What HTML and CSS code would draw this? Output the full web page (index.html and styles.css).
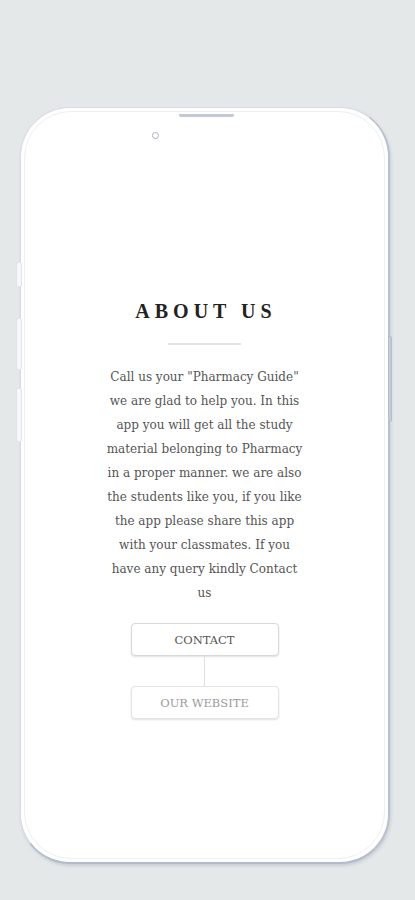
FILE: index.html
```html
<!DOCTYPE html>
<html lang="en">
<head>
  <meta charset="UTF-8" />
  <meta name="viewport" content="width=device-width, initial-scale=1.0"/>
  <title>About Us</title>
  <link rel="stylesheet" href="styles.css">
</head>
<body>
  <div class="phone">
    <span class="side-btn btn-a"></span>
    <span class="side-btn btn-b"></span>
    <span class="side-btn btn-c"></span>
    <span class="side-btn btn-power"></span>
    <div class="screen">
      <span class="speaker"></span>
      <span class="camera"></span>

      <div class="about">
        <h1>ABOUT US</h1>
        <hr class="divider"/>
        <p class="text">Call us your "Pharmacy Guide" we are glad to help you. In this app you will get all the study material belonging to Pharmacy in a proper manner. we are also the students like you, if you like the app please share this app with your classmates. If you have any query kindly Contact us</p>

        <div class="links">
          <button class="link-btn">CONTACT</button>
          <span class="connector"></span>
          <button class="link-btn faded">OUR WEBSITE</button>
        </div>
      </div>
    </div>
  </div>
</body>
</html>
```

FILE: styles.css
```css
body {
  margin: 0;
  background: #e4e8e9;
  font-family: 'DejaVu Serif', serif;
  height: 900px;
  overflow: hidden;
}

.phone {
  position: relative;
  width: 370px;
  height: 757px;
  margin: 107px 0 0 20px;
  box-sizing: border-box;
  border-radius: 50px;
  background: #fff;
  border: 1px solid #d6dbe4;
  border-right: 2px solid #b9c0cf;
  border-bottom: 2px solid #b3bacb;
  box-shadow: 1px 2px 3px rgba(120,130,150,0.25);
}

.screen {
  position: relative;
  box-sizing: border-box;
  margin: 3px;
  height: calc(100% - 6px);
  border-radius: 47px;
  border: 1px solid #eceff3;
  background: #fff;
}

.side-btn {
  position: absolute;
  width: 4px;
  background: #f7f8fa;
  border: 1px solid #e0e4ea;
  border-radius: 2px;
}
.btn-a { left: -5px; top: 154px; height: 23px; }
.btn-b { left: -5px; top: 210px; height: 50px; }
.btn-c { left: -5px; top: 280px; height: 52px; }
.btn-power {
  right: -4px;
  top: 228px;
  height: 84px;
  width: 2px;
  background: #c4cad8;
  border-color: #b6bdcc;
}

.speaker {
  position: absolute;
  top: 2px;
  left: 154px;
  width: 55px;
  height: 3px;
  background: #c3c9d8;
  border-radius: 0 0 2px 2px;
}

.camera {
  position: absolute;
  top: 20px;
  left: 127px;
  width: 5px;
  height: 5px;
  border: 1px solid #aab0ba;
  border-radius: 50%;
}

.about {
  display: flex;
  flex-direction: column;
  align-items: center;
  padding-top: 188px;
}

h1 {
  margin: 0;
  font-family: 'Liberation Serif', serif;
  font-size: 20px;
  font-weight: 700;
  letter-spacing: 5px;
  color: #222;
  padding-left: 3px;
}

.divider {
  width: 73px;
  border: none;
  height: 2px;
  background: #e6e6e6;
  margin: 20px 0 20px;
}

.text {
  margin: 0;
  width: 200px;
  text-align: center;
  font-size: 12px;
  line-height: 24px;
  color: #555;
}

.links {
  display: flex;
  flex-direction: column;
  align-items: center;
  margin-top: 18px;
}

.link-btn {
  width: 148px;
  height: 33px;
  background: #fff;
  border: 1px solid #d8d8d8;
  border-radius: 4px;
  box-shadow: 0 1px 2px rgba(0,0,0,0.12);
  font-family: 'DejaVu Serif', serif;
  font-size: 11.5px;
  color: #555;
  padding: 0;
}

.link-btn.faded {
  color: #9a9a9a;
  border-color: #e4e4e4;
}

.connector {
  width: 1px;
  height: 30px;
  background: #e0e0e0;
}
```
